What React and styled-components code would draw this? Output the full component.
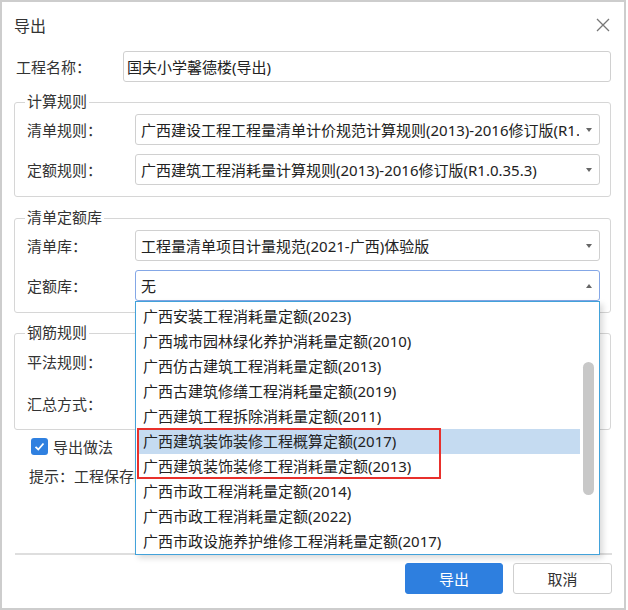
import styled, { createGlobalStyle } from 'styled-components';

const GlobalStyle = createGlobalStyle`
  html, body {
    margin: 0;
    padding: 0;
    background: #ffffff;
  }
  body {
    font-family: "Noto Sans", "Noto Sans CJK SC", sans-serif;
    font-size: 15px;
    color: #333333;
  }
`

const Dialog = styled.div`
  box-sizing: border-box;
  width: 626px;
  height: 610px;
  border: 2px solid #cdcdcd;
  background: #ffffff;
  display: flex;
  flex-direction: column;
`

const Header = styled.div`
  height: 46px;
  display: flex;
  align-items: center;
  justify-content: space-between;
  padding: 0 12px 0 12px;
`

const Title = styled.div`
  font-size: 16px;
  color: #333;
`

const CloseBtn = styled.div`
  width: 16px;
  height: 16px;
  cursor: pointer;
  display: flex;
  margin-right: 1px;
`

const Body = styled.div`
  flex: 1;
  display: flex;
  flex-direction: column;
  padding: 3px 13px 0 12px;
`

const NameRow = styled.div`
  display: flex;
  align-items: center;
  padding-left: 2px;
`

const Label = styled.div`
  width: ${p => p.w || 108}px;
  flex-shrink: 0;
  white-space: nowrap;
  color: #333;
`

const TextInput = styled.div`
  flex: 1;
  box-sizing: border-box;
  height: 31px;
  border: 1px solid #d0d0d0;
  border-radius: 3px;
  display: flex;
  align-items: center;
  padding-left: 3px;
  color: #222;
`

const Group = styled.div`
  position: relative;
  margin-top: ${p => p.mt}px;
  border: 1px solid #d6d6d6;
  border-radius: 3px;
  padding: ${p => p.pt}px 10px ${p => p.pb}px 12px;
  display: flex;
  flex-direction: column;
  gap: ${p => p.gap}px;
`

const Legend = styled.div`
  position: absolute;
  top: -11px;
  left: 10px;
  padding: 0 2px;
  background: #fff;
  line-height: 18px;
  color: #333;
`

const FieldRow = styled.div`
  display: flex;
  align-items: center;
`

const SelectWrap = styled.div`
  position: relative;
  flex: 1;
  min-width: 0;
`

const SelectBox = styled.div`
  box-sizing: border-box;
  height: 31px;
  border: 1px solid ${p => (p.open ? '#84a7e6' : '#d0d0d0')};
  border-radius: 3px;
  display: flex;
  align-items: center;
  padding: 0 20px 0 5px;
  position: relative;
  overflow: hidden;
  background: #fff;
`

const SelectText = styled.span`
  white-space: nowrap;
  overflow: hidden;
  color: #222;
`

const Arrow = styled.span`
  position: absolute;
  right: 7px;
  top: 50%;
  margin-top: -2px;
  width: 0;
  height: 0;
  border-left: 3px solid transparent;
  border-right: 3px solid transparent;
  ${p => (p.up ? 'border-bottom: 4px solid #666;' : 'border-top: 4px solid #666;')}
`

const DropList = styled.div`
  position: absolute;
  top: 100%;
  left: 0;
  right: 0;
  height: 254px;
  box-sizing: border-box;
  border: 1px solid #42a2da;
  background: #fff;
  box-shadow: 3px 3px 6px rgba(0, 0, 0, 0.15);
  z-index: 10;
  overflow: hidden;
  padding: 2px 19px 0 1px;
`

const Option = styled.div`
  height: 25px;
  line-height: 25px;
  padding-left: 6px;
  white-space: nowrap;
  color: #222;
  background: ${p => (p.active ? '#c5dbf1' : 'transparent')};
`

const Thumb = styled.div`
  position: absolute;
  right: 5px;
  top: 60px;
  width: 11px;
  height: 133px;
  border-radius: 6px;
  background: #c8c8c8;
`

const Mark = styled.div`
  position: absolute;
  left: 1px;
  top: 126px;
  width: 304px;
  height: 51px;
  box-sizing: border-box;
  border: 2px solid #e8302c;
  pointer-events: none;
`

const CheckRow = styled.label`
  margin-top: 6px;
  height: 20px;
  display: flex;
  align-items: center;
  gap: 5px;
  padding-left: 17px;
`

const CheckBox = styled.span`
  width: 17px;
  height: 17px;
  border-radius: 3px;
  background: #2f80e0;
  display: flex;
  align-items: center;
  justify-content: center;
`

const Hint = styled.div`
  margin-top: 10px;
  line-height: 20px;
  padding-left: 15px;
  color: #333;
  white-space: nowrap;
`

const Footer = styled.div`
  margin: 0 12px 0 13px;
  border-top: 2px solid #dedede;
  padding: 8px 0 14px;
  display: flex;
  justify-content: flex-end;
  gap: 10px;
`

const Button = styled.button`
  box-sizing: border-box;
  width: ${p => p.w}px;
  height: 31px;
  border-radius: 3px;
  font-family: "Noto Sans", "Noto Sans CJK SC", sans-serif;
  font-size: 15px;
  cursor: pointer;
  border: 1px solid ${p => (p.primary ? '#2e7fdf' : '#cfcfcf')};
  background: ${p => (p.primary ? '#2e7fdf' : '#ffffff')};
  color: ${p => (p.primary ? '#ffffff' : '#333333')};
`

const quotaOptions = [
  '广西安装工程消耗量定额(2023)',
  '广西城市园林绿化养护消耗量定额(2010)',
  '广西仿古建筑工程消耗量定额(2013)',
  '广西古建筑修缮工程消耗量定额(2019)',
  '广西建筑工程拆除消耗量定额(2011)',
  '广西建筑装饰装修工程概算定额(2017)',
  '广西建筑装饰装修工程消耗量定额(2013)',
  '广西市政工程消耗量定额(2014)',
  '广西市政工程消耗量定额(2022)',
  '广西市政设施养护维修工程消耗量定额(2017)',
]

function Select({ value, open, children }) {
  return (
    <SelectWrap>
      <SelectBox open={open}>
        <SelectText>{value}</SelectText>
        <Arrow up={open} />
      </SelectBox>
      {children}
    </SelectWrap>
  )
}

export default function App() {
  return (
    <>
      <GlobalStyle />
      <Dialog>
        <Header>
          <Title>导出</Title>
          <CloseBtn>
            <svg width="16" height="16" viewBox="0 0 16 16">
              <path d="M2 2 L14 14 M14 2 L2 14" stroke="#777" strokeWidth="1.3" fill="none" />
            </svg>
          </CloseBtn>
        </Header>
        <Body>
          <NameRow>
            <Label w={107}>工程名称：</Label>
            <TextInput>国夫小学馨德楼(导出)</TextInput>
          </NameRow>

          <Group mt={20} pt={11} pb={11} gap={9}>
            <Legend>计算规则</Legend>
            <FieldRow>
              <Label>清单规则：</Label>
              <Select value="广西建设工程工程量清单计价规范计算规则(2013)-2016修订版(R1.0.35.3)" />
            </FieldRow>
            <FieldRow>
              <Label>定额规则：</Label>
              <Select value="广西建筑工程消耗量计算规则(2013)-2016修订版(R1.0.35.3)" />
            </FieldRow>
          </Group>

          <Group mt={21} pt={11} pb={11} gap={9}>
            <Legend>清单定额库</Legend>
            <FieldRow>
              <Label>清单库：</Label>
              <Select value="工程量清单项目计量规范(2021-广西)体验版" />
            </FieldRow>
            <FieldRow style={{ zIndex: 5 }}>
              <Label>定额库：</Label>
              <Select value="无" open>
                <DropList>
                  {quotaOptions.map((o, i) => (
                    <Option key={o} active={i === 5}>{o}</Option>
                  ))}
                  <Thumb />
                  <Mark />
                </DropList>
              </Select>
            </FieldRow>
          </Group>

          <Group mt={20} pt={12} pb={10} gap={11}>
            <Legend>钢筋规则</Legend>
            <FieldRow>
              <Label>平法规则：</Label>
              <Select value="16系平法规则" />
            </FieldRow>
            <FieldRow>
              <Label>汇总方式：</Label>
              <Select value="按照钢筋图示尺寸-即外皮汇总" />
            </FieldRow>
          </Group>

          <CheckRow>
            <CheckBox>
              <svg width="13" height="13" viewBox="0 0 13 13">
                <path d="M2.5 6.8 L5.3 9.5 L10.5 3.5" stroke="#fff" strokeWidth="1.8" fill="none" />
              </svg>
            </CheckBox>
            导出做法
          </CheckRow>
          <Hint>提示：工程保存时将同时导出做法信息</Hint>
        </Body>
        <Footer>
          <Button primary w={98}>导出</Button>
          <Button w={99}>取消</Button>
        </Footer>
      </Dialog>
    </>
  )
}
